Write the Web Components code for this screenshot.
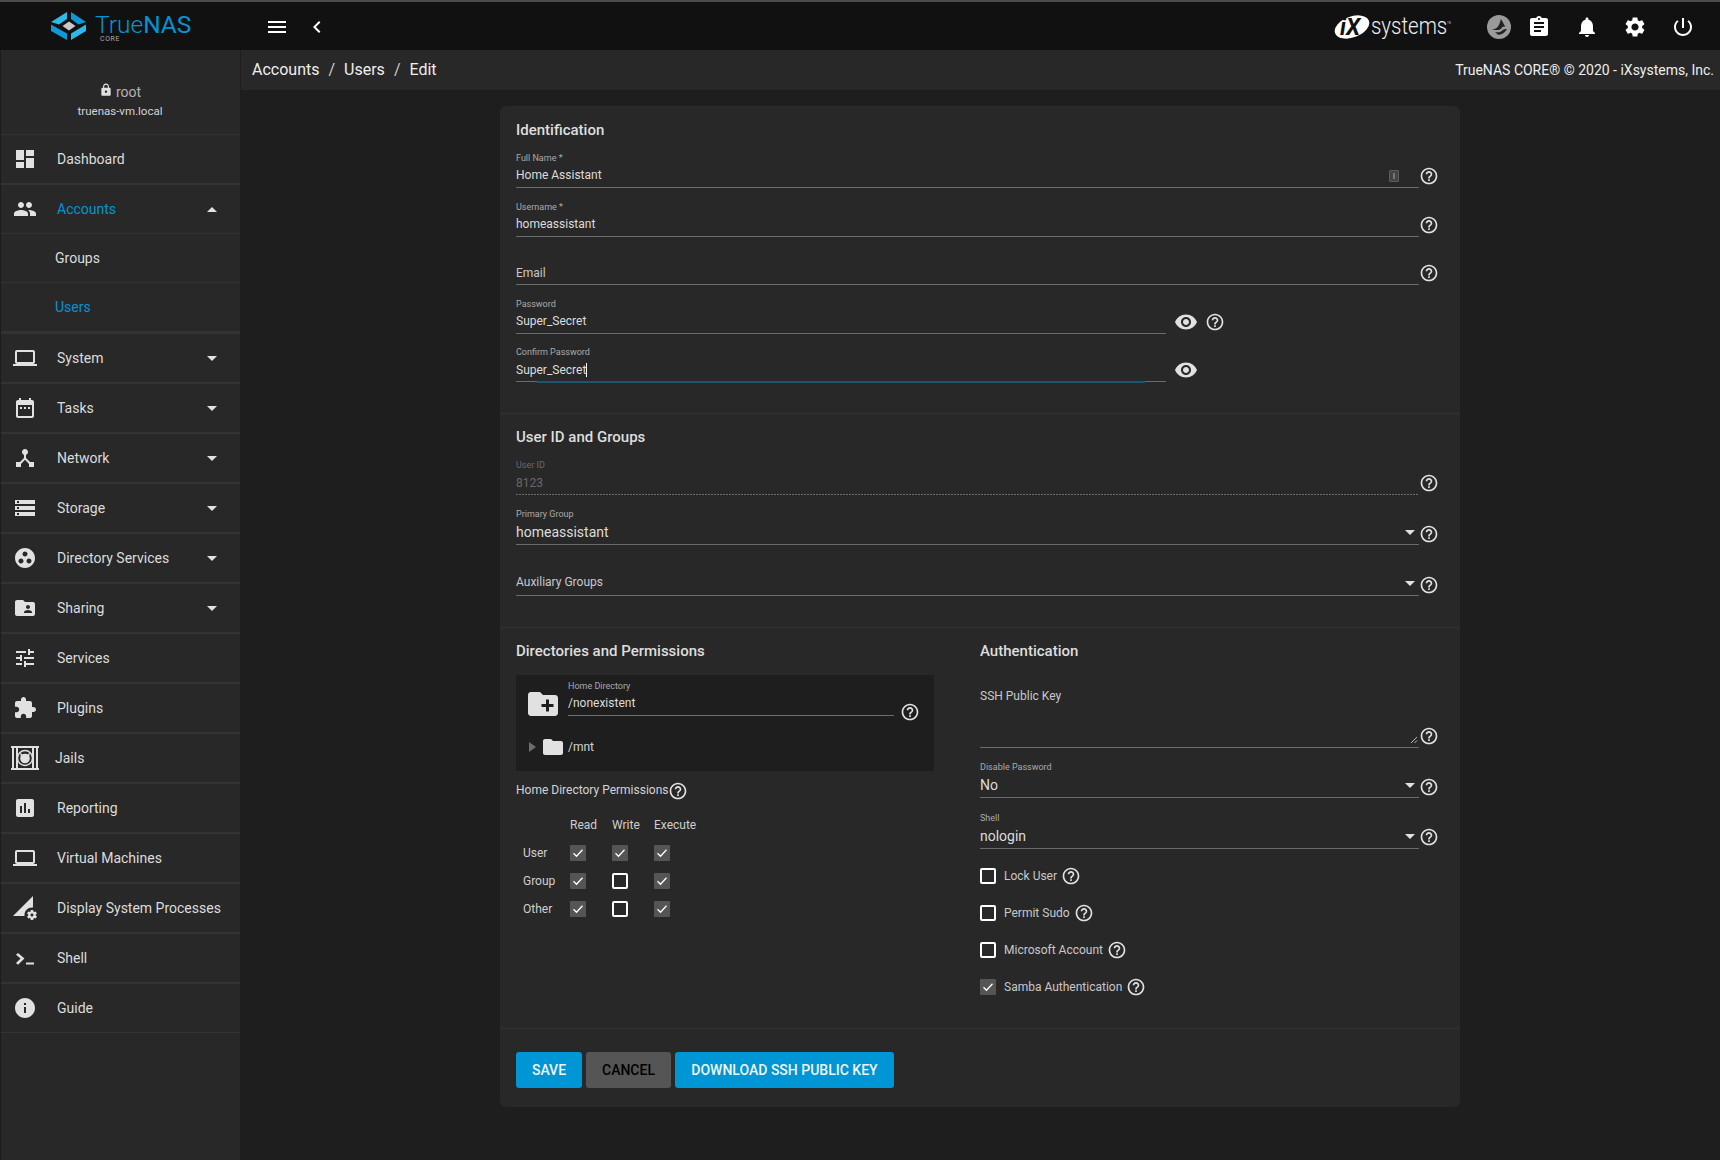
<!doctype html>
<html>
<head>
<meta charset="utf-8">
<title>TrueNAS</title>
<style>
html, body { margin: 0; height: 1160px; overflow: hidden; background: #1e1e1e; color: #e1e1e1; font-family: Roboto, "Liberation Sans", sans-serif; }
.page { display: flex; height: 1110px; }
.main { flex: 1; min-width: 0; margin-left: 1px; display: flex; flex-direction: column; }
.content { padding: 16px 0 0 259px; }
</style>
</head>
<body>
<tn-topbar></tn-topbar>
<div class="page">
	<tn-sidebar>
		<tn-nav-item icon="dashboard" label="Dashboard"></tn-nav-item>
		<tn-nav-item icon="group" label="Accounts" active arrow="up" thin></tn-nav-item>
		<tn-nav-item sub label="Groups" thin></tn-nav-item>
		<tn-nav-item sub label="Users" active thick></tn-nav-item>
		<tn-nav-item icon="laptop" label="System" arrow="down"></tn-nav-item>
		<tn-nav-item icon="date" label="Tasks" arrow="down"></tn-nav-item>
		<tn-nav-item icon="hub" label="Network" arrow="down"></tn-nav-item>
		<tn-nav-item icon="storage" label="Storage" arrow="down"></tn-nav-item>
		<tn-nav-item icon="groupwork" label="Directory Services" arrow="down"></tn-nav-item>
		<tn-nav-item icon="foldershared" label="Sharing" arrow="down"></tn-nav-item>
		<tn-nav-item icon="tune" label="Services"></tn-nav-item>
		<tn-nav-item icon="extension" label="Plugins"></tn-nav-item>
		<tn-nav-item icon="jail" label="Jails"></tn-nav-item>
		<tn-nav-item icon="assessment" label="Reporting"></tn-nav-item>
		<tn-nav-item icon="laptop" label="Virtual Machines"></tn-nav-item>
		<tn-nav-item icon="process" label="Display System Processes"></tn-nav-item>
		<tn-nav-item icon="shell" label="Shell"></tn-nav-item>
		<tn-nav-item icon="info" label="Guide" thin></tn-nav-item>
	</tn-sidebar>
	<div class="main">
		<tn-crumbs></tn-crumbs>
		<div class="content">
			<tn-card>
				<tn-section style="padding-bottom:31px">
					<tn-group heading="Identification">
						<tn-field style="margin-top:11px" label="Full Name *" value="Home Assistant" badge></tn-field>
						<tn-field style="margin-top:11.5px" label="Username *" value="homeassistant"></tn-field>
						<tn-field style="margin-top:11.5px;--shift:1px" placeholder="Email"></tn-field>
						<tn-field style="margin-top:11.5px" label="Password" value="Super_Secret" short eye></tn-field>
						<tn-field style="margin-top:11.5px;--shift:1px" label="Confirm Password" value="Super_Secret" short eye nohelp focus></tn-field>
					</tn-group>
				</tn-section>
				<tn-section style="padding-top:13px;padding-bottom:31px">
					<tn-group heading="User ID and Groups">
						<tn-field style="margin-top:11px;--shift:1px" label="User ID" value="8123" disabled></tn-field>
						<tn-field style="margin-top:13px" label="Primary Group" value="homeassistant" select></tn-field>
						<tn-field style="margin-top:14px;--shift:-1px" placeholder="Auxiliary Groups" select></tn-field>
					</tn-group>
				</tn-section>
				<tn-section columns style="padding-bottom:33px">
					<tn-group heading="Directories and Permissions">
						<tn-tree style="margin-top:14px"></tn-tree>
						<tn-perms style="margin-top:9px"></tn-perms>
					</tn-group>
					<tn-group heading="Authentication">
						<tn-field style="margin-top:26px" placeholder="SSH Public Key" textarea></tn-field>
						<tn-field style="margin-top:13px" label="Disable Password" value="No" select></tn-field>
						<tn-field style="margin-top:14px;--help-mb:2px" label="Shell" value="nologin" select></tn-field>
						<tn-checkbox style="margin-top:19px" label="Lock User" help></tn-checkbox>
						<tn-checkbox style="margin-top:21px" label="Permit Sudo" help></tn-checkbox>
						<tn-checkbox style="margin-top:21px" label="Microsoft Account" help></tn-checkbox>
						<tn-checkbox style="margin-top:21px" label="Samba Authentication" help checked></tn-checkbox>
					</tn-group>
				</tn-section>
				<tn-section last style="padding-top:23px;padding-bottom:19px">
					<tn-actions>
						<tn-button style="width:66px">SAVE</tn-button>
						<tn-button style="width:85px" muted>CANCEL</tn-button>
						<tn-button style="width:219px">DOWNLOAD SSH PUBLIC KEY</tn-button>
					</tn-actions>
				</tn-section>
			</tn-card>
		</div>
	</div>
</div>

<script>
const ICONS = {
	menu: "M3 18h18v-2H3v2zm0-5h18v-2H3v2zm0-7v2h18V6H3z",
	back: "M15.41 7.41L14 6l-6 6 6 6 1.41-1.41L10.83 12z",
	lock: "M18 8h-1V6c0-2.76-2.24-5-5-5S7 3.24 7 6v2H6c-1.1 0-2 .9-2 2v10c0 1.1.9 2 2 2h12c1.1 0 2-.9 2-2V10c0-1.1-.9-2-2-2zm-6 9c-1.1 0-2-.9-2-2s.9-2 2-2 2 .9 2 2-.9 2-2 2zm3.1-9H8.9V6c0-1.71 1.39-3.1 3.1-3.1 1.71 0 3.1 1.39 3.1 3.1v2z",
	dashboard: "M3 13h8V3H3v10zm0 8h8v-6H3v6zm10 0h8V11h-8v10zm0-18v6h8V3h-8z",
	group: "M16 11c1.66 0 2.99-1.34 2.99-3S17.66 5 16 5c-1.66 0-3 1.34-3 3s1.34 3 3 3zm-8 0c1.66 0 2.99-1.34 2.99-3S9.66 5 8 5C6.34 5 5 6.34 5 8s1.34 3 3 3zm0 2c-2.33 0-7 1.17-7 3.5V19h14v-2.5c0-2.33-4.67-3.5-7-3.5zm8 0c-.29 0-.62.02-.97.05 1.16.84 1.97 1.97 1.97 3.45V19h6v-2.5c0-2.33-4.67-3.5-7-3.5z",
	laptop: "M20 18c1.1 0 1.99-.9 1.99-2L22 6c0-1.1-.9-2-2-2H4c-1.1 0-2 .9-2 2v10c0 1.1.9 2 2 2H0v2h24v-2h-4zM4 6h16v10H4V6z",
	date: "M9 11H7v2h2v-2zm4 0h-2v2h2v-2zm4 0h-2v2h2v-2zm2-7h-1V2h-2v2H8V2H6v2H5c-1.11 0-1.99.9-1.99 2L3 20c0 1.1.89 2 2 2h14c1.1 0 2-.9 2-2V6c0-1.1-.9-2-2-2zm0 16H5V9h14v11z",
	hub: "M17 16l-4-4V8.82C14.16 8.4 15 7.3 15 6c0-1.66-1.34-3-3-3S9 4.34 9 6c0 1.3.84 2.4 2 2.82V12l-4 4H3v5h5v-3.05l4-4.2 4 4.2V21h5v-5h-4z",
	storage: "M2 20h20v-4H2v4zm2-3h2v2H4v-2zM2 4v4h20V4H2zm4 3H4V5h2v2zm-4 7h20v-4H2v4zm2-3h2v2H4v-2z",
	groupwork: "M12 2C6.48 2 2 6.48 2 12s4.48 10 10 10 10-4.48 10-10S17.52 2 12 2zM8 17.5c-1.38 0-2.5-1.12-2.5-2.5s1.12-2.5 2.5-2.5 2.5 1.12 2.5 2.5-1.12 2.5-2.5 2.5zM9.5 8c0-1.38 1.12-2.5 2.5-2.5s2.5 1.12 2.5 2.5-1.12 2.5-2.5 2.5S9.5 9.38 9.5 8zm6.5 9.5c-1.38 0-2.5-1.12-2.5-2.5s1.12-2.5 2.5-2.5 2.5 1.12 2.5 2.5-1.12 2.5-2.5 2.5z",
	foldershared: "M20 6h-8l-2-2H4c-1.1 0-1.99.9-1.99 2L2 18c0 1.1.9 2 2 2h16c1.1 0 2-.9 2-2V8c0-1.1-.9-2-2-2zm-5 3c1.1 0 2 .9 2 2s-.9 2-2 2-2-.9-2-2 .9-2 2-2zm4 8h-8v-1c0-1.33 2.67-2 4-2s4 .67 4 2v1z",
	tune: "M3 17v2h6v-2H3zM3 5v2h10V5H3zm10 16v-2h8v-2h-8v-2h-2v6h2zM7 9v2H3v2h4v2h2V9H7zm14 4v-2H11v2h10zm-6-4h2V7h4V5h-4V3h-2v6z",
	extension: "M20.5 11H19V7c0-1.1-.9-2-2-2h-4V3.5C13 2.12 11.88 1 10.5 1S8 2.12 8 3.5V5H4c-1.1 0-1.99.9-1.99 2v3.8H3.5c1.49 0 2.7 1.21 2.7 2.7s-1.21 2.7-2.7 2.7H2V20c0 1.1.9 2 2 2h3.8v-1.5c0-1.49 1.21-2.7 2.7-2.7 1.49 0 2.7 1.21 2.7 2.7V22H17c1.1 0 2-.9 2-2v-4h1.5c1.38 0 2.5-1.12 2.5-2.5S21.88 11 20.5 11z",
	assessment: "M19 3H5c-1.1 0-2 .9-2 2v14c0 1.1.9 2 2 2h14c1.1 0 2-.9 2-2V5c0-1.1-.9-2-2-2zM9 17H7v-7h2v7zm4 0h-2V7h2v10zm4 0h-2v-4h2v4z",
	process: "M18.99 11.5c.34 0 .67.03 1 .07L20 0 0 20h11.56c-.04-.33-.07-.66-.07-1 0-4.14 3.36-7.5 7.5-7.5zm3.71 7.99c.02-.16.04-.32.04-.49 0-.17-.01-.33-.04-.49l1.06-.83c.09-.08.12-.21.06-.32l-1-1.73c-.06-.11-.19-.15-.31-.11l-1.24.5c-.26-.2-.54-.37-.85-.49l-.19-1.32c-.01-.12-.12-.21-.24-.21h-2c-.12 0-.23.09-.25.21l-.19 1.32c-.3.13-.59.29-.85.49l-1.24-.5c-.11-.04-.24 0-.31.11l-1 1.73c-.06.11-.04.24.06.32l1.06.83c-.02.16-.03.32-.03.49 0 .17.01.33.03.49l-1.06.83c-.09.08-.12.21-.06.32l1 1.73c.06.11.19.15.31.11l1.24-.5c.26.2.54.37.85.49l.19 1.32c.02.12.12.21.25.21h2c.12 0 .23-.09.25-.21l.19-1.32c.3-.13.59-.29.84-.49l1.25.5c.11.04.24 0 .31-.11l1-1.73c.06-.11.03-.24-.06-.32l-1.07-.83zm-3.71 1.01c-.83 0-1.5-.67-1.5-1.5s.67-1.5 1.5-1.5 1.5.67 1.5 1.5-.67 1.5-1.5 1.5z",
	shell: "M3 8.8L5 7l6.500 5.500L5 18.800 3 17l4.600-4.500zM13 16.500h8v2h-8z",
	info: "M12 2C6.48 2 2 6.48 2 12s4.48 10 10 10 10-4.48 10-10S17.52 2 12 2zm1 15h-2v-6h2v6zm0-8h-2V7h2v2z",
	help: "M11 18h2v-2h-2v2zm1-16C6.48 2 2 6.48 2 12s4.48 10 10 10 10-4.48 10-10S17.52 2 12 2zm0 18c-4.41 0-8-3.59-8-8s3.59-8 8-8 8 3.59 8 8-3.59 8-8 8zm0-14c-2.21 0-4 1.79-4 4h2c0-1.1.9-2 2-2s2 .9 2 2c0 2-3 1.75-3 5h2c0-2.25 3-2.5 3-5 0-2.21-1.79-4-4-4z",
	eye: "M12 4.5C7 4.5 2.73 7.61 1 12c1.73 4.39 6 7.5 11 7.5s9.27-3.11 11-7.5c-1.73-4.39-6-7.5-11-7.5zM12 17c-2.76 0-5-2.24-5-5s2.24-5 5-5 5 2.24 5 5-2.24 5-5 5zm0-8c-1.66 0-3 1.34-3 3s1.34 3 3 3 3-1.34 3-3-1.34-3-3-3z",
	assignment: "M19 3h-4.18C14.4 1.84 13.3 1 12 1c-1.3 0-2.4.84-2.82 2H5c-1.1 0-2 .9-2 2v14c0 1.1.9 2 2 2h14c1.1 0 2-.9 2-2V5c0-1.1-.9-2-2-2zm-7 0c.55 0 1 .45 1 1s-.45 1-1 1-1-.45-1-1 .45-1 1-1zm2 14H7v-2h7v2zm3-4H7v-2h10v2zm0-4H7V7h10v2z",
	bell: "M12 22c1.1 0 2-.9 2-2h-4c0 1.1.89 2 2 2zm6-6v-5c0-3.07-1.64-5.64-4.5-6.32V4c0-.83-.67-1.5-1.5-1.5s-1.5.67-1.5 1.5v.68C7.63 5.36 6 7.92 6 11v5l-2 2v1h16v-1l-2-2z",
	settings: "M19.14 12.94c.04-.3.06-.61.06-.94 0-.32-.02-.64-.07-.94l2.03-1.58c.18-.14.23-.41.12-.61l-1.92-3.32c-.12-.22-.37-.29-.59-.22l-2.39.96c-.5-.38-1.03-.7-1.62-.94l-.36-2.54c-.04-.24-.24-.41-.48-.41h-3.84c-.24 0-.43.17-.47.41l-.36 2.54c-.59.24-1.13.57-1.62.94l-2.39-.96c-.22-.08-.47 0-.59.22L2.74 8.87c-.12.21-.08.47.12.61l2.03 1.58c-.05.3-.09.63-.09.94s.02.64.07.94l-2.03 1.58c-.18.14-.23.41-.12.61l1.92 3.32c.12.22.37.29.59.22l2.39-.96c.5.38 1.03.7 1.62.94l.36 2.54c.05.24.24.41.48.41h3.84c.24 0 .44-.17.47-.41l.36-2.54c.59-.24 1.13-.56 1.62-.94l2.39.96c.22.08.47 0 .59-.22l1.92-3.32c.12-.22.07-.47-.12-.61l-2.01-1.58zM12 15.6c-1.98 0-3.6-1.62-3.6-3.6s1.62-3.6 3.6-3.6 3.6 1.62 3.6 3.6-1.62 3.6-3.6 3.6z",
	power: "M13 3h-2v10h2V3zm4.83 2.17l-1.42 1.42C17.99 7.86 19 9.81 19 12c0 3.87-3.13 7-7 7s-7-3.13-7-7c0-2.19 1.01-4.14 2.58-5.42L6.17 5.17C4.23 6.82 3 9.26 3 12c0 4.97 4.03 9 9 9s9-4.03 9-9c0-2.74-1.23-5.18-3.17-6.83z",
	folder: "M10 4H4c-1.1 0-1.99.9-1.99 2L2 18c0 1.1.9 2 2 2h16c1.1 0 2-.9 2-2V8c0-1.1-.9-2-2-2h-8l-2-2z",
	newfolder: "M20 6h-8l-2-2H4c-1.11 0-1.99.89-1.99 2L2 18c0 1.11.89 2 2 2h16c1.11 0 2-.89 2-2V8c0-1.11-.89-2-2-2zm-1 8h-3v3h-2v-3h-3v-2h3V9h2v3h3v2z",
};

function icon(name, size = 24, color = "currentColor") {
	return `<svg width="${size}" height="${size}" viewBox="0 0 24 24" fill="${color}" style="display:block;flex:none"><path d="${ICONS[name]}"/></svg>`;
}

// jail icon is not a material one, bars with the daemon head between them
const JAIL_ICON = `<svg width="28" height="24" viewBox="0 0 28 24" style="display:block;flex:none" fill="#e1e1e1">
	<rect x="0" y="0" width="28" height="2"/><rect x="0" y="22" width="28" height="2"/>
	<rect x="1" y="2" width="2" height="20"/><rect x="5" y="2" width="2" height="20"/><rect x="21" y="2" width="2" height="20"/><rect x="25" y="2" width="2" height="20"/>
	<circle cx="14" cy="12" r="7.5" fill="none" stroke="#e1e1e1" stroke-width="1.4"/>
	<circle cx="14" cy="12.500" r="4.800"/>
	<path d="M9 6.500l3 2.500h4l3-2.500-.8 4h-8.400z"/>
</svg>`;

class Shadowed extends HTMLElement {
	constructor() {
		super();
		this.attachShadow({mode:"open"});
	}
	connectedCallback() { this.shadowRoot.innerHTML = this.render(); }
}

class TnTopbar extends Shadowed {
	render() {
		return `<style>
		:host { display: flex; align-items: center; box-sizing: border-box; height: 50px; border-top: 2px solid #4c4c4c; padding-top: 2px; background: #111; color: #fff; }
		.logo { display: flex; align-items: center; width: 241px; position: relative; height: 46px; }
		.logo svg { margin-left: 40px; }
		.brand { display: block; height: 20px; font-size: 24.5px; line-height: 20px; color: #0095d5; margin-left: -5px; font-weight: 300; margin-top: -4px; }
		.brand b { font-weight: 400; }
		.core { position: absolute; left: 100px; top: 32px; font-size: 7px; line-height: 7px; letter-spacing: .6px; color: #aaa; }
		.nav { display: flex; align-items: center; }
		.nav svg:first-child { margin-left: 24px; }
		.nav svg:last-child { margin-left: 16px; }
		.right { margin-left: auto; display: flex; align-items: center; margin-right: 25px; }
		.ix { display: flex; align-items: center; margin-right: 36px; }
		.systems { display: block; width: 76px; font-size: 23px; font-weight: 300; line-height: 28px; margin-left: 1px; margin-top: -1px; color: #eee; white-space: nowrap; transform: scaleX(.89); transform-origin: 0 50%; }
		.tm { width: 4px; font-size: 3px; align-self: flex-start; margin-top: 7px; color: #bbb; overflow: hidden; }
		.tc { margin-right: 16px; }
		.right .btn { margin-left: 24px; }
		.right .btn:first-of-type { margin-left: 0; }
		</style>
		<div class="logo">
			<svg width="60" height="40" viewBox="0 0 60 40" style="margin-top:2px">
				<polygon points="11,14 27,4 27,11 19,16.500" fill="#2db9ea"/>
				<polygon points="31,4 46,14 38.500,16.500 31,11" fill="#0e98d6"/>
				<polygon points="11,16.500 27,25.500 27,32 11,23" fill="#0e98d6"/>
				<polygon points="46,16.500 31,25.500 31,32 46,23" fill="#2db9ea"/>
				<polygon points="29,13.500 35.500,18 29,22.500 22.500,18" fill="#c9c9c9"/>
			</svg>
			<span class="brand">True<b>NAS</b></span>
			<span class="core">CORE</span>
		</div>
		<div class="nav">${icon("menu")}${icon("back")}</div>
		<div class="right">
			<div class="ix">
				<svg width="36" height="26" viewBox="0 0 36 26">
					<ellipse cx="18" cy="13" rx="18" ry="10.500" transform="rotate(-20 18 13)" fill="#fff"/>
					<text x="6" y="21" font-family="Roboto, sans-serif" font-weight="700" font-style="italic" font-size="23" fill="#111">iX</text>
				</svg>
				<span class="systems">systems</span><span class="tm">TM</span>
			</div>
			<svg class="tc" width="24" height="24" viewBox="0 0 24 24">
				<circle cx="12" cy="12" r="12" fill="#9a9a9a"/>
				<path d="M14 4l4.500 8c-2-1-3.300-.3-4.300 1.500-1.200 1.800-4.700 1.800-9.200 1.300 4-.6 6.500-3 7.500-6.300z" fill="#222"/>
				<path d="M8 17c3.500 1 6-.2 7.800-2 1.200-1 2.500-1.200 4.200-1-2 3.500-5 6.200-9 5.700z" fill="#222"/>
			</svg>
			<span class="btn">${icon("assignment")}</span>
			<span class="btn">${icon("bell")}</span>
			<span class="btn">${icon("settings")}</span>
			<span class="btn">${icon("power")}</span>
		</div>`;
	}
}

class TnSidebar extends Shadowed {
	render() {
		return `<style>
		:host { display: block; flex: none; box-sizing: border-box; width: 240px; background: #282828; border-left: 1px solid #1c1c1c; font-size: 14px; }
		.profile { height: 84px; border-bottom: 1px solid #333; text-align: center; }
		.user { display: flex; align-items: center; justify-content: center; gap: 3px; line-height: 20px; padding-top: 32px; color: #b4b4b4; padding-right: 1px; }
		.user svg { margin-top: -4px; }
		.host { font-size: 11.5px; line-height: 16px; margin-top: 1px; color: #d4d4d4; padding-right: 1px; }
		</style>
		<div class="profile">
			<div class="user">${icon("lock", 14, "#e1e1e1")}<span>root</span></div>
			<div class="host">truenas-vm.local</div>
		</div>
		<slot></slot>`;
	}
}

class TnNavItem extends Shadowed {
	render() {
		let name = this.getAttribute("icon");
		let arrow = this.getAttribute("arrow");
		let glyph = name == "jail" ? JAIL_ICON : name ? icon(name, 24, "#e1e1e1") : "";
		return `<style>
		:host { display: flex; align-items: center; box-sizing: border-box; height: 50px; border-bottom: 2px solid #333; padding-left: 12px; color: #dcdcdc; }
		:host([thin]) { height: 49px; border-bottom-width: 1px; }
		:host([thick]) { height: 51px; border-bottom-width: 3px; }
		:host([sub]) { padding-left: 54px; }
		:host([active]) { color: #0095d5; }
		:host([icon=jail]) { padding-left: 10px; }
		.label { margin-left: 20px; }
		:host([sub]) .label { margin-left: 0; }
		:host([icon=jail]) .label { margin-left: 16px; }
		.arrow { margin-left: auto; margin-right: 23px; width: 0; height: 0; border: 5px solid transparent; border-bottom: 0; border-top-color: #e1e1e1; }
		.arrow.up { border-top: 0; border-bottom: 5px solid #e1e1e1; }
		</style>
		${glyph}<span class="label">${this.getAttribute("label")}</span>
		${arrow ? `<i class="arrow ${arrow}"></i>` : ""}`;
	}
}

class TnCrumbs extends Shadowed {
	render() {
		return `<style>
		:host { display: flex; align-items: center; flex: none; height: 40px; background: #282828; padding: 0 6px 0 11px; font-size: 16px; color: #eee; }
		.trail { display: flex; margin-top: -2px; }
		.sep { margin: 0 9px 0 9px; color: #ccc; }
		.copy { margin-left: auto; font-size: 14px; }
		</style>
		<div class="trail"><span>Accounts</span><span class="sep">/</span><span>Users</span><span class="sep">/</span><span>Edit</span></div>
		<span class="copy">TrueNAS CORE® © 2020 - iXsystems, Inc.</span>`;
	}
}

class TnCard extends Shadowed {
	render() {
		return `<style>
		:host { display: block; width: 960px; background: #282828; border-radius: 6px; }
		</style><slot></slot>`;
	}
}

class TnSection extends Shadowed {
	render() {
		return `<style>
		:host { display: block; padding: 14px 21px 0 16px; border-bottom: 1px solid #333; }
		:host([last]) { border-bottom: 0; }
		:host([columns]) { display: grid; grid-template-columns: 464px 1fr; padding-top: 13px; }
		</style><slot></slot>`;
	}
}

class TnGroup extends Shadowed {
	render() {
		return `<style>
		:host { display: block; min-width: 0; }
		h3 { margin: 0; font-size: 15px; line-height: 20px; font-weight: 500; color: #dedede; }
		</style>
		<h3>${this.getAttribute("heading")}</h3>
		<slot></slot>`;
	}
}

class TnHelp extends Shadowed {
	render() {
		return `<style>
		:host { display: block; flex: none; width: 20px; height: 20px; }
		</style>${icon("help", 20, "#e1e1e1")}`;
	}
}

class TnField extends Shadowed {
	render() {
		let has = n => this.hasAttribute(n);
		let label = this.getAttribute("label");
		let value = this.getAttribute("value");
		let placeholder = this.getAttribute("placeholder");
		return `<style>
		:host { display: flex; align-items: flex-end; --line: #6b6b6b; }
		.input { position: relative; flex: 1; min-width: 0; }
		:host([short]) .input { flex: none; width: 650px; }
		label { display: block; height: 12px; line-height: 12px; padding-top: 1px; margin-bottom: -1px; font-size: 9px; color: #aaa; white-space: nowrap; }
		:host([select]) label { padding-top: 0; margin-bottom: 0; }
		.value { height: 18px; line-height: 18px; margin-top: calc(3px + var(--shift, 0px)); font-size: 12px; color: #dcdcdc; white-space: nowrap; }
		.value.cursor span { border-right: 1px solid #fff; }
		:host([select]) .value { font-size: 14px; }
		:host([placeholder]) .value { color: #c8c8c8; font-size: 12px; }
		.line { height: 1px; margin-top: calc(3px - var(--shift, 0px)); background: var(--line); }
		:host([disabled]) label, :host([disabled]) .value { color: #686868; }
		:host([disabled]) .line { background: repeating-linear-gradient(90deg, #6b6b6b 0 2px, transparent 2px 3px); }
		:host([focus]) .line { position: relative; }
		:host([focus]) .line::after { content: ""; position: absolute; left: 21px; right: 21px; top: 0; height: 2px; background: #1b556f; }
		.arrow { position: absolute; right: 4px; bottom: 10px; width: 0; height: 0; border: 5px solid transparent; border-bottom: 0; border-top-color: #e1e1e1; }
		.badge { position: absolute; right: 20px; bottom: 6px; box-sizing: border-box; width: 10px; height: 12px; background: #444; border: 1px solid #5c5c5c; border-radius: 1px; }
		.badge::after { content: ""; position: absolute; left: 3px; top: 2px; width: 2px; height: 6px; background: #777; }
		:host([textarea]) .input { height: 61px; display: flex; flex-direction: column; }
		:host([textarea]) .value { margin-top: 0; height: 16px; line-height: 18px; }
		:host([textarea]) .line { margin-top: auto; }
		:host([textarea]) label { display: none; }
		.grip { position: absolute; right: 1px; bottom: 4px; }
		.eye { margin-left: 8px; flex: none; }
		tn-help { margin-bottom: var(--help-mb, 2px); margin-left: var(--help-ml, 0); }
		:host([select]) tn-help { margin-bottom: var(--help-mb, 1px); }
		:host([short]) tn-help { margin-left: 7px; margin-bottom: 2px; }
		</style>
		<div class="input">
			<label>${label || ""}</label>
			<div class="value ${has("focus") ? "cursor" : ""}"><span>${value || placeholder || ""}</span></div>
			${has("select") ? `<i class="arrow"></i>` : ""}
			${has("badge") ? `<i class="badge"></i>` : ""}
			${has("textarea") ? `<svg class="grip" width="8" height="8" viewBox="0 0 8 8" stroke="#bbb" stroke-width="1"><path d="M1 7L7 1M4.500 7L7 4.500"/></svg>` : ""}
			<div class="line"></div>
		</div>
		${has("eye") ? `<span class="eye">${icon("eye", 24, "#e1e1e1")}</span>` : ""}
		${has("nohelp") ? "" : "<tn-help></tn-help>"}`;
	}
}

class TnTree extends Shadowed {
	render() {
		return `<style>
		:host { display: block; width: 418px; box-sizing: border-box; background: #1e1e1e; padding: 4px 0 12px; }
		.top { display: flex; align-items: flex-start; padding-left: 9px; }
		.top > svg { margin: 7px 7px 0 0; }
		tn-field { width: 352px; --help-mb: -6px; --help-ml: 6px; }
		.node { display: flex; align-items: center; height: 24px; margin-top: 13px; padding-left: 13px; font-size: 12px; color: #d4d4d4; }
		.tri { width: 0; height: 0; border: 5px solid transparent; border-right: 0; border-left: 7px solid #6e6e6e; margin-right: 5px; }
		.node svg { margin-right: 3px; }
		</style>
		<div class="top">${icon("newfolder", 36, "#e1e1e1")}<tn-field label="Home Directory" value="/nonexistent"></tn-field></div>
		<div class="node"><i class="tri"></i>${icon("folder", 24, "#e1e1e1")}<span>/mnt</span></div>`;
	}
}

class TnPerms extends Shadowed {
	render() {
		let box = on => `<tn-checkbox ${on ? "checked" : ""}></tn-checkbox>`;
		let row = (name, r, w, x) => `<span class="who">${name}</span>${box(r)}${box(w)}${box(x)}`;
		return `<style>
		:host { display: block; font-size: 12px; color: #cfcfcf; }
		.title { display: flex; align-items: center; height: 20px; font-size: 12px; color: #d4d4d4; }
		.title tn-help { margin-top: 2px; }
		.grid { display: grid; grid-template-columns: 47px 42px 42px auto; grid-auto-rows: 28px; align-items: center; justify-items: start; padding-left: 7px; margin-top: 11px; width: 240px; }
		</style>
		<div class="title">Home Directory Permissions<tn-help></tn-help></div>
		<div class="grid">
			<span></span><span>Read</span><span>Write</span><span>Execute</span>
			${row("User", 1, 1, 1)}
			${row("Group", 1, 0, 1)}
			${row("Other", 1, 0, 1)}
		</div>`;
	}
}

class TnCheckbox extends Shadowed {
	render() {
		let label = this.getAttribute("label");
		let check = `<svg width="16" height="16" viewBox="0 0 16 16" fill="none" stroke="#fff" stroke-width="1.3"><path d="M3.500 8.300L6.500 11.200 12.500 4.800"/></svg>`;
		return `<style>
		:host { display: flex; align-items: center; height: 16px; font-size: 12px; color: #c8c8c8; }
		.box { flex: none; box-sizing: border-box; width: 16px; height: 16px; border: 2px solid #fff; border-radius: 2px; }
		:host([checked]) .box { border: 0; border-radius: 1px; background: #555; }
		.label { margin-left: 8px; white-space: nowrap; }
		tn-help { margin-left: 4px; }
		</style>
		<span class="box">${this.hasAttribute("checked") ? check : ""}</span>
		${label ? `<span class="label">${label}</span>` : ""}
		${this.hasAttribute("help") ? "<tn-help></tn-help>" : ""}`;
	}
}

class TnActions extends Shadowed {
	render() {
		return `<style>:host { display: flex; gap: 4px; }</style><slot></slot>`;
	}
}

class TnButton extends Shadowed {
	render() {
		return `<style>
		:host { display: flex; align-items: center; justify-content: center; height: 36px; background: #0095d5; color: #f4f4f4; border-radius: 3px; font-size: 14px; font-weight: 500; white-space: nowrap; }
		:host([muted]) { background: #555; color: #000; }
		</style><slot></slot>`;
	}
}

customElements.define("tn-topbar", TnTopbar);
customElements.define("tn-sidebar", TnSidebar);
customElements.define("tn-nav-item", TnNavItem);
customElements.define("tn-crumbs", TnCrumbs);
customElements.define("tn-card", TnCard);
customElements.define("tn-section", TnSection);
customElements.define("tn-group", TnGroup);
customElements.define("tn-help", TnHelp);
customElements.define("tn-field", TnField);
customElements.define("tn-tree", TnTree);
customElements.define("tn-perms", TnPerms);
customElements.define("tn-checkbox", TnCheckbox);
customElements.define("tn-actions", TnActions);
customElements.define("tn-button", TnButton);
</script>
</body>
</html>
